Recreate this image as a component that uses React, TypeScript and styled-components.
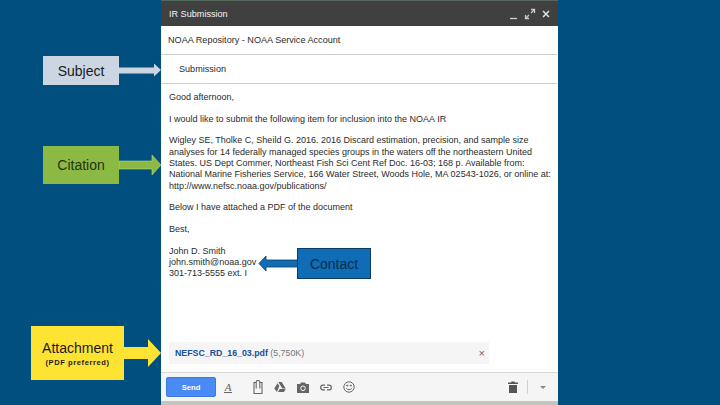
import { createGlobalStyle } from "styled-components";
import styled from "styled-components";

const GlobalStyle = createGlobalStyle`
  html, body { margin: 0; padding: 0; height: 405px; overflow: hidden; background: #004f7e; }
  body { font-family: "Liberation Sans", Arial, sans-serif; }
`;

const Slide = styled.div`
  position: relative;
  width: 720px;
  height: 405px;
  background: #004f7e;
  display: flex;
  justify-content: flex-start;
  padding-left: 161px;
  box-sizing: border-box;
  overflow: hidden;
`;

const Compose = styled.div`
  width: 397px;
  height: 405px;
  display: flex;
  flex-direction: column;
  background: #fff;
  color: #2b2b2b;
  font-size: 9px;
`;

const TitleBar = styled.div`
  height: 26px;
  flex: none;
  box-sizing: border-box;
  border-top: 1px solid #56685c;
  background: #404040;
  color: #f4f4f4;
  display: flex;
  align-items: center;
  justify-content: space-between;
  padding: 0 7px 0 8px;
  font-size: 9.1px;
`;

const WindowControls = styled.div`
  display: flex;
  gap: 5px;
  align-items: center;
`;

const FieldRow = styled.div<{ $indent?: number }>`
  height: 29px;
  flex: none;
  box-sizing: border-box;
  border-bottom: 1px solid #cfcfcf;
  display: flex;
  align-items: center;
  font-size: 9.1px;
  padding-left: ${(p) => p.$indent ?? 7}px;
  margin-right: 1px;
`;

const Body = styled.div`
  flex: 1;
  padding: 8px 6px 0 8px;
  line-height: 11.3px;
`;

const Paragraph = styled.p`
  margin: 0 0 10.4px;
  white-space: nowrap;
`;

const AttachmentChip = styled.div`
  flex: none;
  height: 22px;
  margin: 0 69px 8px 8px;
  background: #f5f5f5;
  display: flex;
  align-items: center;
  justify-content: space-between;
  padding: 0 4px 0 6px;
  font-size: 8.8px;
  color: #777;
`;

const FileName = styled.span`
  color: #15509c;
  font-weight: 700;
`;

const ChipClose = styled.span`
  color: #666;
  font-size: 11px;
`;

const Footer = styled.div`
  flex: none;
  height: 33px;
  box-sizing: border-box;
  background: #f5f5f5;
  border-top: 1px solid #d8d8d8;
  border-bottom: 4px solid #c4c4c0;
  display: flex;
  align-items: center;
  padding: 0 12px 0 5px;
`;

const SendButton = styled.div`
  width: 50px;
  height: 20px;
  flex: none;
  background: #4a8af4;
  border: 1px solid #3b78e0;
  box-sizing: border-box;
  border-radius: 2px;
  color: #fff;
  font-weight: 700;
  font-size: 7.6px;
  display: flex;
  align-items: center;
  justify-content: center;
  margin-right: 8px;
`;

const ToolIcons = styled.div`
  display: flex;
  align-items: center;
  gap: 11px;
`;

const FormatA = styled.span`
  font-family: "Liberation Serif", serif;
  font-style: italic;
  font-size: 11px;
  color: #666;
  border-bottom: 1px solid #666;
  line-height: 10px;
  width: 8px;
  text-align: center;
  margin-right: 21px;
`;

const FooterEnd = styled.div`
  margin-left: auto;
  display: flex;
  align-items: center;
`;

const Divider = styled.div`
  width: 1px;
  height: 14px;
  background: #d0d0d0;
  margin: 0 12px 0 9px;
`;

const Caret = styled.div`
  width: 0;
  height: 0;
  border-left: 3px solid transparent;
  border-right: 3px solid transparent;
  border-top: 3px solid #888;
`;

/* callouts sit on top of the slide, so they are placed by coordinates */
const Callout = styled.div<{
  $left: number;
  $top: number;
  $width: number;
  $height: number;
  $bg: string;
  $ink?: string;
  $edge?: string;
}>`
  position: absolute;
  left: ${(p) => p.$left}px;
  top: ${(p) => p.$top}px;
  width: ${(p) => p.$width}px;
  height: ${(p) => p.$height}px;
  background: ${(p) => p.$bg};
  border: ${(p) => (p.$edge ? `1px solid ${p.$edge}` : "none")};
  box-sizing: border-box;
  color: ${(p) => p.$ink ?? "#1a1a1a"};
  font-size: 14px;
  display: flex;
  flex-direction: column;
  align-items: center;
  justify-content: center;
`;

const CalloutNote = styled.span`
  font-size: 7.5px;
  font-weight: 700;
  letter-spacing: 0.6px;
  margin-top: 2px;
`;

const Arrow = styled.svg<{ $left: number; $top: number }>`
  position: absolute;
  left: ${(p) => p.$left}px;
  top: ${(p) => p.$top}px;
`;

const MinIcon = () => (
  <svg width="10" height="12" viewBox="0 0 10 12"><path d="M1 10.500h7" stroke="#ccc" strokeWidth="1.300" /></svg>
);
const ExpandIcon = () => (
  <svg width="12" height="12" viewBox="0 0 12 12" fill="none" stroke="#ccc">
    <path d="M7 1.500h3.500V5" strokeWidth="1.300" />
    <path d="M10 2 7 5" strokeWidth="1.300" />
    <path d="M5 10.500H1.500V7" strokeWidth="1.300" />
    <path d="M2 10l3-3" strokeWidth="1.300" />
  </svg>
);
const CloseIcon = () => (
  <svg width="10" height="10" viewBox="0 0 10 10"><path d="M2 2l6 6M8 2l-6 6" stroke="#ddd" strokeWidth="1.600" /></svg>
);
const ClipIcon = () => (
  <svg width="10" height="14" viewBox="0 0 10 14" fill="none" stroke="#666" strokeWidth="1.100">
    <path d="M3.200 2.500H1v11h8v-11H6.800" />
    <path d="M3.200 8.500V1.800a1.800 1.300 0 0 1 3.600 0v6.700" />
  </svg>
);
const DriveIcon = () => (
  <svg width="12" height="12" viewBox="0 0 12 12" fill="#666">
    <path d="M4.300 1h3.400l4 6.600H8.300zM3.600 2.300 5.300 5 2.900 11 .3 7.600zM4 11l1.700-3h6L10 11z" />
  </svg>
);
const CameraIcon = () => (
  <svg width="12" height="11" viewBox="0 0 12 11">
    <path d="M0 2h3l1-1.500h4L9 2h3v9H0z" fill="#666" />
    <circle cx="6" cy="6.300" r="2.300" fill="none" stroke="#f5f5f5" strokeWidth="1" />
  </svg>
);
const LinkIcon = () => (
  <svg width="12" height="7" viewBox="0 0 12 7" fill="none" stroke="#666" strokeWidth="1.200">
    <path d="M5 1.200H3a2.300 2.300 0 0 0 0 4.600h2M7 1.200h2a2.300 2.300 0 0 1 0 4.600H7M3.500 3.500h5" />
  </svg>
);
const SmileIcon = () => (
  <svg width="12" height="12" viewBox="0 0 12 12" fill="none" stroke="#666" strokeWidth="1">
    <circle cx="6" cy="6" r="5.200" />
    <path d="M3.300 7.300c1 1.800 4.400 1.800 5.400 0" />
    <circle cx="4.200" cy="4.500" r=".6" fill="#666" />
    <circle cx="7.800" cy="4.500" r=".6" fill="#666" />
  </svg>
);
const TrashIcon = () => (
  <svg width="10" height="12" viewBox="0 0 10 12" fill="#555">
    <path d="M0 1.500h3L3.500.5h3l.5 1h3V3H0zM1 4h8v8H1z" />
  </svg>
);

const App = () => (
  <Slide>
    <GlobalStyle />
    <Compose>
      <TitleBar>
        <span>IR Submission</span>
        <WindowControls>
          <MinIcon />
          <ExpandIcon />
          <CloseIcon />
        </WindowControls>
      </TitleBar>
      <FieldRow>NOAA Repository - NOAA Service Account</FieldRow>
      <FieldRow $indent={18}>Submission</FieldRow>
      <Body>
        <Paragraph>Good afternoon,</Paragraph>
        <Paragraph>I would like to submit the following item for inclusion into the NOAA IR</Paragraph>
        <Paragraph>
          Wigley SE, Tholke C, Sheild G. 2016. 2016 Discard estimation, precision, and sample size
          <br />
          analyses for 14 federally managed species groups in the waters off the northeastern United
          <br />
          States. US Dept Commer, Northeast Fish Sci Cent Ref Doc. 16-03; 168 p. Available from:
          <br />
          National Marine Fisheries Service, 166 Water Street, Woods Hole, MA 02543-1026, or online at:
          <br />
          http://www.nefsc.noaa.gov/publications/
        </Paragraph>
        <Paragraph>Below I have attached a PDF of the document</Paragraph>
        <Paragraph>Best,</Paragraph>
        <Paragraph>
          John D. Smith
          <br />
          john.smith@noaa.gov
          <br />
          301-713-5555 ext. I
        </Paragraph>
      </Body>
      <AttachmentChip>
        <span>
          <FileName>NEFSC_RD_16_03.pdf</FileName> (5,750K)
        </span>
        <ChipClose>×</ChipClose>
      </AttachmentChip>
      <Footer>
        <SendButton>Send</SendButton>
        <FormatA>A</FormatA>
        <ToolIcons>
          <ClipIcon />
          <DriveIcon />
          <CameraIcon />
          <LinkIcon />
          <SmileIcon />
        </ToolIcons>
        <FooterEnd>
          <TrashIcon />
          <Divider />
          <Caret />
        </FooterEnd>
      </Footer>
    </Compose>

    <Callout $left={43} $top={56} $width={76} $height={29} $bg="#cbd6e2">Subject</Callout>
    <Arrow $left={119} $top={62} width="43" height="16" viewBox="0 0 43 16">
      <path d="M0 5.500h35V1.500l7 6.500-7 6.500v-3H0z" fill="#cbd6e2" />
    </Arrow>

    <Callout $left={43} $top={146} $width={76} $height={38} $bg="#8cb944" $ink="#26330f">Citation</Callout>
    <Arrow $left={119} $top={154} width="43" height="22" viewBox="0 0 43 22">
      <path d="M0 7h33V1l9 10-9 10v-6H0z" fill="#8cb944" stroke="#b9d68a" strokeWidth=".6" />
    </Arrow>

    <Callout $left={297} $top={248} $width={74} $height={31} $bg="#0f6cb5" $ink="#0a2f50" $edge="#0a3d63">Contact</Callout>
    <Arrow $left={258} $top={255} width="40" height="17" viewBox="0 0 40 17">
      <path d="M39.500 5H8V1L1 8.500 8 16v-4h31.500z" fill="#0f6cb5" stroke="#0a3d63" strokeWidth=".8" />
    </Arrow>

    <Callout $left={31} $top={326} $width={93} $height={54} $bg="#ffe333">
      Attachment
      <CalloutNote>(PDF preferred)</CalloutNote>
    </Callout>
    <Arrow $left={124} $top={338} width="38" height="30" viewBox="0 0 38 30">
      <path d="M0 9h24V1l13 14-13 14v-8H0z" fill="#ffe333" />
    </Arrow>
  </Slide>
);

export default App;
